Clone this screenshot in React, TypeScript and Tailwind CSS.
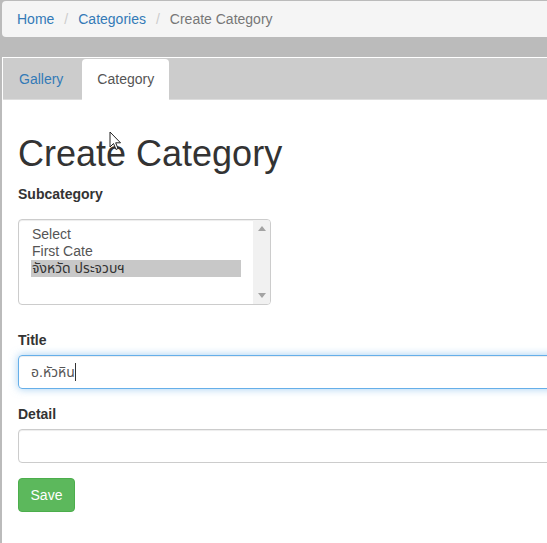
import React from 'react';

const font = { fontFamily: '"Liberation Sans", "Noto Sans Thai", "Noto Sans", Arial, sans-serif' };

const App = () => {
  return (
    <div style={font} className="w-[547px] h-[543px] overflow-hidden bg-[#bbbbbb] text-[14px] text-[#333]">
      <div className="w-[700px] pt-[1px] pl-[2px]">
        {/* breadcrumb */}
        <div className="h-[36px] bg-[#f5f5f5] rounded-[4px] flex items-center pl-[15px] gap-[5px] leading-[20px]">
          <span className="text-[#337ab7]">Home</span>
          <span className="text-[#ccc] px-[5px]">/</span>
          <span className="text-[#337ab7]">Categories</span>
          <span className="text-[#ccc] px-[5px]">/</span>
          <span className="text-[#777]">Create Category</span>
        </div>

        {/* panel */}
        <div className="mt-[20px] border-t border-l border-white">
          <div className="h-[42px] bg-[#cccccc] border-b border-[#dddddd] flex items-end pl-[1px]">
            <div className="h-[41px] -mb-[1px] px-[15px] flex items-center text-[#337ab7] mr-[4px]">Gallery</div>
            <div className="h-[41px] -mb-[1px] px-[15px] flex items-center bg-white rounded-t-[4px] text-[#555]">Category</div>
          </div>

          <div className="relative bg-white pl-[15px] pt-[34px] pb-[40px]">
            {/* mouse pointer */}
            <svg className="absolute left-[106px] top-[31px]" width="14" height="21" viewBox="0 0 14 21">
              <path d="M1 1 L1 16 L4.5 12.5 L7 18.5 L9 17.5 L6.7 11.8 L11.5 11.8 Z" fill="white" stroke="#222" strokeWidth="1" />
            </svg>

            <h1 className="text-[36px] leading-[40px] font-normal text-[#333]">Create Category</h1>

            <label className="block mt-[10px] font-bold leading-[20px]">Subcategory</label>
            <div className="mt-[15px] w-[253px] h-[86px] border border-[#cccccc] rounded-[4px] flex overflow-hidden shadow-[inset_0_1px_1px_rgba(0,0,0,0.075)]">
              <div className="flex-1 pl-[12px] pr-[12px] pt-[6px] leading-[17px] text-[#555]">
                <div className="px-[1px]">Select</div>
                <div className="px-[1px]">First Cate</div>
                <div className="px-[1px] bg-[#c8c8c8] text-[#333]">จังหวัด ประจวบฯ</div>
              </div>
              <div className="w-[17px] bg-[#f1f1f1] flex flex-col justify-between items-center py-[6px]">
                <svg width="8" height="5" viewBox="0 0 8 5"><path d="M0 5 L4 0 L8 5 Z" fill="#a3a3a3" /></svg>
                <svg width="8" height="5" viewBox="0 0 8 5"><path d="M0 0 L4 5 L8 0 Z" fill="#a3a3a3" /></svg>
              </div>
            </div>

            <label className="block mt-[25px] font-bold leading-[20px]">Title</label>
            <div className="mt-[5px] h-[34px] w-[600px] border border-[#66afe9] rounded-[4px] flex items-center px-[12px] text-[#555] shadow-[inset_0_1px_1px_rgba(0,0,0,0.075),0_0_8px_rgba(102,175,233,0.6)]">
              <span>อ.หัวหิน</span>
              <span className="w-[1px] h-[18px] bg-[#333]" />
            </div>

            <label className="block mt-[15px] font-bold leading-[20px]">Detail</label>
            <div className="mt-[5px] h-[34px] w-[600px] border border-[#cccccc] rounded-[4px] shadow-[inset_0_1px_1px_rgba(0,0,0,0.075)]" />

            <button className="mt-[15px] h-[34px] w-[57px] bg-[#5cb85c] border border-[#4cae4c] rounded-[4px] text-white leading-[20px]">
              Save
            </button>
          </div>
        </div>
      </div>
    </div>
  );
};

export default App;
